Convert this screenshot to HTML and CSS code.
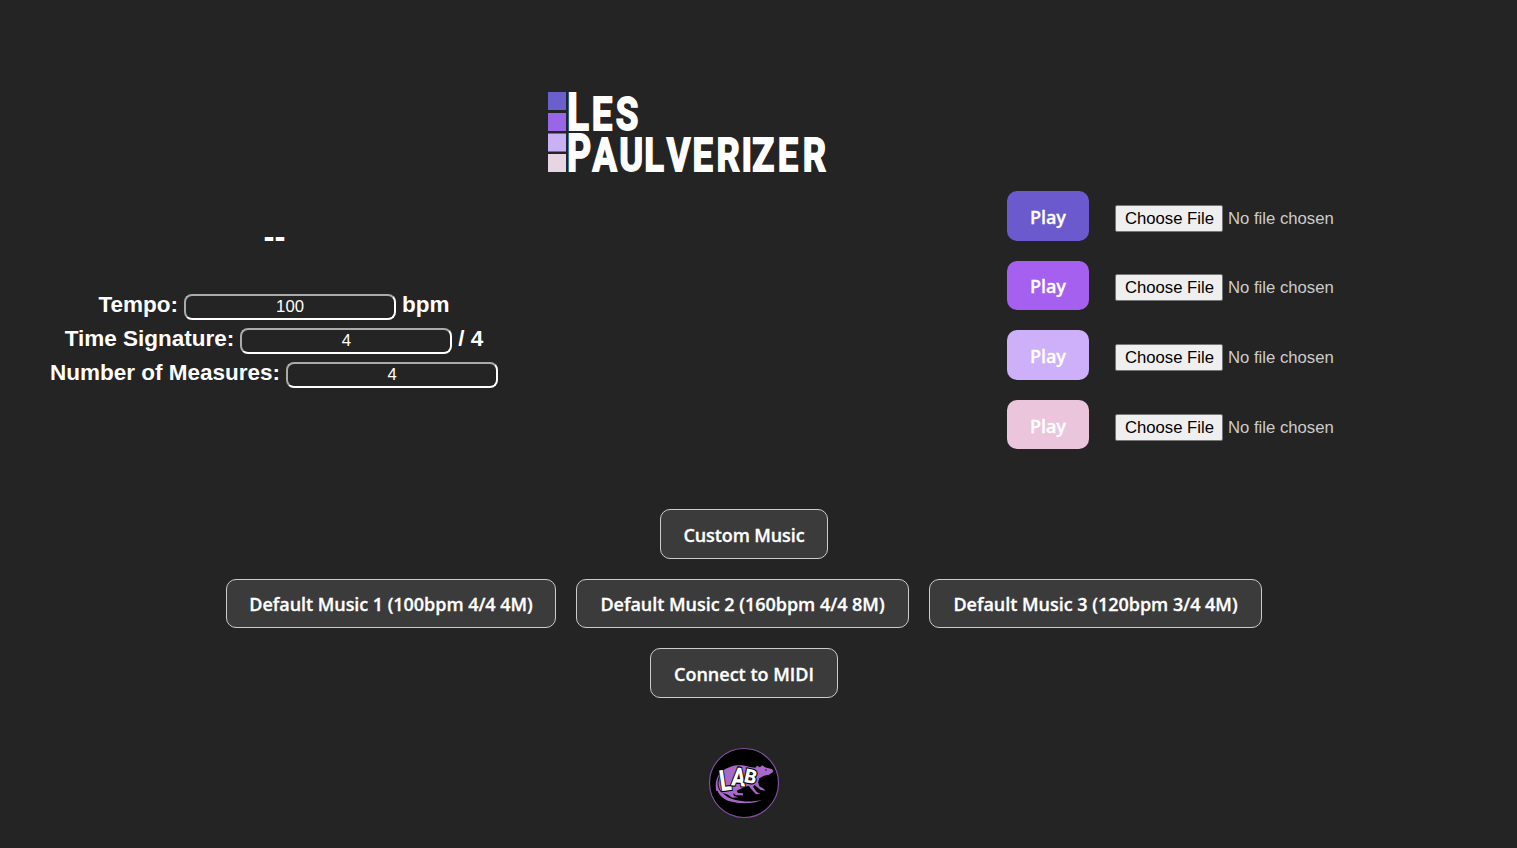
FILE: index.html
```html
<!DOCTYPE html>
<html lang="en">
<head>
<meta charset="utf-8">
<title>Les Paulverizer</title>
<link rel="stylesheet" href="styles.css">
</head>
<body>
<header class="header">
  <svg class="logo" width="280" height="80" viewBox="0 0 280 80" role="img" aria-label="Les Paulverizer">
    <rect x="0" y="0" width="18" height="18" fill="#6a5fcd"/>
    <rect x="0" y="21" width="18" height="18" fill="#9966e8"/>
    <rect x="0" y="41.500" width="18" height="18" fill="#c8b1f4"/>
    <rect x="0" y="62" width="18" height="18" fill="#e8d5e4"/>
    <g class="wordmark" transform="scale(.78 1)">
      <text x="24.500" y="38" font-size="52">L</text>
      <text x="56 87" y="38" font-size="47">ES</text>
      <text x="24.500" y="79" font-size="52" textLength="31" lengthAdjust="spacingAndGlyphs">P</text>
      <text x="57 91.500 123.500 152.300 185.200 216 248 262 294.500 326.500" y="79" font-size="46.500">AULVERIZER</text>
    </g>
  </svg>
</header>
<main class="panels">
  <section class="settings">
    <h1 class="count">--</h1>
    <label class="setting">Tempo: <input class="field" type="text" value="100"> bpm</label>
    <label class="setting">Time Signature: <input class="field" type="text" value="4"> / 4</label>
    <label class="setting">Number of Measures: <input class="field" type="text" value="4"></label>
  </section>
  <section class="tracks">
    <div class="track"><button class="btn play indigo">Play</button><input class="file" type="file"></div>
    <div class="track"><button class="btn play violet">Play</button><input class="file" type="file"></div>
    <div class="track"><button class="btn play lilac">Play</button><input class="file" type="file"></div>
    <div class="track"><button class="btn play pink">Play</button><input class="file" type="file"></div>
  </section>
</main>
<section class="actions">
  <div class="row"><button class="btn custom"><span>Custom Music</span></button></div>
  <div class="row">
    <button class="btn preset first"><span>Default Music 1 (100bpm 4/4 4M)</span></button>
    <button class="btn preset"><span>Default Music 2 (160bpm 4/4 8M)</span></button>
    <button class="btn preset"><span>Default Music 3 (120bpm 3/4 4M)</span></button>
  </div>
  <div class="row"><button class="btn midi"><span>Connect to MIDI</span></button></div>
</section>
<footer class="footer">
  <svg class="badge" width="70" height="70" viewBox="0 0 210 210" role="img" aria-label="Lab">
    <circle cx="105" cy="105" r="103.500" fill="#000" stroke="#8050a0" stroke-width="3.500"/>
    <g fill="#a868c8">
      <path d="M22 129C14 94 32 65 65 56C83 50 106 51 122 57L139 59L144 53L153 58L160 52L168 58L190 64L193 71L180 80L165 83L151 91L147 103L151 115L165 123L168 128L154 125L137 111L132 116L143 132L154 138L141 139L127 124L119 113L95 122L83 128L87 135L102 136L102 142L81 142L72 136L75 144L89 148L70 149L54 139C43 137 36 132 32 127Z"/>
      <path d="M24 99C16 132 40 157 72 162C104 169 136 166 160 155C134 162 103 162 77 155C50 149 30 131 31 98Z"/>
    </g>
    <path d="M31 85C24 105 27 122 38 133" fill="none" stroke="#000" stroke-width="3"/>
    <circle cx="171" cy="66" r="2" fill="#000"/>
    <g class="lab">
      <text transform="translate(36 130) rotate(-8)" font-size="88" textLength="34" lengthAdjust="spacingAndGlyphs">L</text>
      <text transform="translate(66 112) rotate(5)" font-size="76" textLength="42" lengthAdjust="spacingAndGlyphs">A</text>
      <text transform="translate(103 101) rotate(12)" font-size="58" textLength="37" lengthAdjust="spacingAndGlyphs">B</text>
    </g>
  </svg>
</footer>
</body>
</html>
```
FILE: styles.css
```css
* { box-sizing: border-box; }
body {
  margin: 0;
  height: 848px;
  overflow: hidden;
  background: #242424;
  color: #fff;
  font-family: "Liberation Sans", Arial, sans-serif;
}
.header { padding: 92px 0 0 548px; height: 191px; }
.logo, .badge { display: block; overflow: visible; }
.wordmark {
  fill: #fff;
  stroke: #fff;
  stroke-width: 1.8;
  font-family: Roboto, sans-serif;
  font-weight: 700;
}
.panels {
  display: grid;
  grid-template-columns: 548px 1fr;
  column-gap: 459px;
  height: 318px;
}
.settings { text-align: center; }
.count { margin: 26px 0 31px; padding-left: 1px; font-size: 33px; line-height: 40px; }
.setting {
  display: flex;
  align-items: baseline;
  justify-content: center;
  gap: 6px;
  height: 34px;
  line-height: 34px;
  font-size: 22.500px;
  font-weight: 700;
  white-space: nowrap;
}
.field {
  width: 212px;
  height: 26px;
  padding: 0;
  border: 2px solid;
  border-color: #aaa #fff #fff #aaa;
  border-radius: 8px;
  background: transparent;
  color: #fff;
  font: 16.700px "Liberation Sans", Arial, sans-serif;
  text-align: center;
}
.tracks { display: flex; flex-direction: column; gap: 20px; }
.track { display: flex; align-items: center; gap: 26px; height: 49.600px; }
.btn {
  height: 49.600px;
  padding: 2px 0 0;
  border: 1px solid #ccc;
  border-radius: 10px;
  background: #3b3b3b;
  color: #fff;
  font: 600 18px "Open Sans", "Noto Sans", sans-serif;
  letter-spacing: -.1px;
  -webkit-text-stroke: .3px #fff;
  white-space: nowrap;
}
.play { width: 82px; border: 0; }
.indigo { background: #6a5acd; }
.violet { background: #a560f0; }
.lilac { background: #ceb0fa; }
.pink { background: #ebc5dc; }
.file {
  width: 300px;
  margin-top: 5px;
  color: #ccc;
  font: 16.700px "Liberation Sans", Arial, sans-serif;
}
.file::file-selector-button {
  width: 108px;
  height: 27px;
  margin: 0 5px 0 0;
  padding: 1px 0 0 1px;
  border: 1px solid #767676;
  border-radius: 2px;
  background: #efefef;
  color: #000;
  font: inherit;
}
.actions { width: 1488px; display: flex; flex-direction: column; gap: 20px; }
.row { display: flex; justify-content: center; gap: 20px; height: 49.500px; }
.custom { width: 168px; }
.preset { width: 333px; letter-spacing: -.02px; }
.first { width: 330px; letter-spacing: -.05px; }
.midi { width: 188px; letter-spacing: 0; }
.footer { width: 1488px; display: flex; justify-content: center; padding-top: 50px; }
.lab {
  fill: #fff;
  stroke: #000;
  stroke-width: 7;
  paint-order: stroke;
  font-family: Roboto, sans-serif;
  font-weight: 900;
}
```
